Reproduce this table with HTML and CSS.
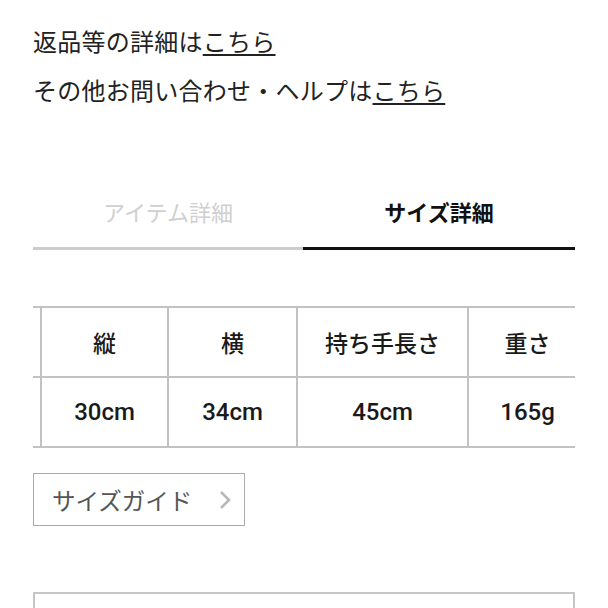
FILE: index.html
```html
<!DOCTYPE html>
<html lang="ja">
<head>
<meta charset="utf-8">
<title>サイズ詳細</title>
<link rel="stylesheet" href="styles.css">
</head>
<body>
<main class="page">
  <section class="links">
    <p class="link-line">返品等の詳細は<a class="link" href="#">こちら</a></p>
    <p class="link-line">その他お問い合わせ・ヘルプは<a class="link" href="#">こちら</a></p>
  </section>

  <nav class="tabs">
    <div class="tab">アイテム詳細</div>
    <div class="tab tab-active">サイズ詳細</div>
  </nav>

  <div class="size-table-wrap">
    <table class="size-table">
      <colgroup>
        <col class="col-edge">
        <col class="col-a">
        <col class="col-b">
        <col class="col-c">
        <col class="col-d">
      </colgroup>
      <tr class="row-head">
        <td class="edge"></td>
        <th>縦</th>
        <th>横</th>
        <th>持ち手長さ</th>
        <th>重さ</th>
      </tr>
      <tr class="row-body">
        <td class="edge"></td>
        <td>30cm</td>
        <td>34cm</td>
        <td>45cm</td>
        <td>165g</td>
      </tr>
    </table>
  </div>

  <a class="size-guide" href="#">
    <span class="size-guide-label">サイズガイド</span>
    <svg class="chevron" width="13" height="20" viewBox="0 0 13 20" aria-hidden="true">
      <polyline points="3,2 11,10 3,18" fill="none" stroke="#b8b8b8" stroke-width="2.6" stroke-linejoin="miter"/>
    </svg>
  </a>

  <div class="next-box"></div>
</main>
</body>
</html>
```

FILE: styles.css
```css
html, body {
  margin: 0;
  padding: 0;
  background: #ffffff;
}

body {
  font-family: "Noto Sans CJK JP", "Noto Sans", sans-serif;
  color: #222222;
}

.page {
  padding: 16px 33px 0 33px;
  display: flex;
  flex-direction: column;
  align-items: flex-start;
}

.links {
  width: 100%;
}

.link-line {
  margin: 0;
  font-size: 24px;
  letter-spacing: 0.25px;
  line-height: 49px;
  color: #222222;
  white-space: nowrap;
}

.link {
  color: #222222;
  text-decoration: underline;
  text-decoration-thickness: 2px;
  text-underline-offset: 3px;
}

.tabs {
  margin-top: 82px;
  width: 100%;
  display: grid;
  grid-template-columns: 270px 1fr;
}

.tab {
  font-size: 22px;
  line-height: 30px;
  text-align: center;
  color: #cfcfcf;
  padding-bottom: 21px;
  border-bottom: 3px solid #cccccc;
}

.tab-active {
  color: #111111;
  font-weight: 700;
  border-bottom-color: #111111;
}

.size-table-wrap {
  margin-top: 56px;
  width: 542px;
  overflow: hidden;
}

.size-table {
  table-layout: fixed;
  border-collapse: separate;
  border-spacing: 0;
  width: 553px;
  font-family: Roboto, "Noto Sans CJK JP", sans-serif;
  font-weight: 500;
  color: #1a1a1a;
}

.col-edge { width: 7px; }
.col-a { width: 127px; }
.col-b { width: 129px; }
.col-c { width: 171px; }
.col-d { width: 119px; }

.size-table th,
.size-table td {
  padding: 0;
  text-align: center;
  border-bottom: 2px solid #c2c2c2;
  border-left: 2px solid #c2c2c2;
  white-space: nowrap;
}

.size-table .edge {
  border-left: none;
}

.row-head th,
.row-head td {
  border-top: 2px solid #c2c2c2;
  height: 68px;
  font-size: 23px;
  font-weight: 500;
  font-family: "Noto Sans CJK JP", sans-serif;
}

.row-body td {
  height: 68px;
  font-size: 24px;
}

.size-guide {
  margin-top: 25px;
  display: inline-flex;
  align-items: center;
  gap: 26px;
  height: 53px;
  box-sizing: border-box;
  padding: 0 13px 0 18px;
  border: 1px solid #ababab;
  text-decoration: none;
  color: #555555;
}

.size-guide-label {
  font-size: 23.5px;
  line-height: 30px;
}

.chevron {
  display: block;
}

.next-box {
  margin-top: 66px;
  width: 542px;
  height: 60px;
  box-sizing: border-box;
  border: 2px solid #c6c6c6;
}
```
